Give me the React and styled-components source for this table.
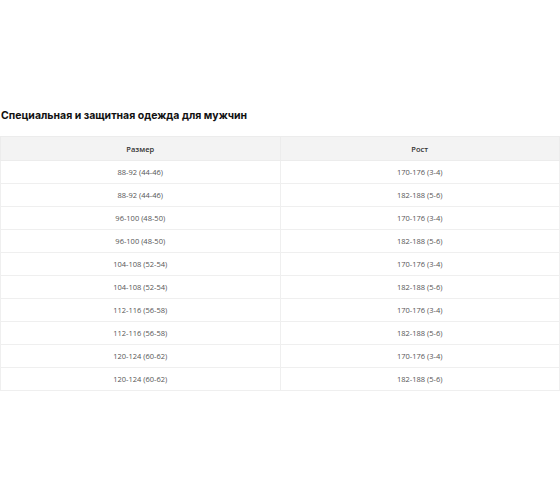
import React from 'react'
import styled, { createGlobalStyle } from 'styled-components'

const Global = createGlobalStyle`
  body {
    margin: 0;
    background: #fff;
    font-family: "Open Sans", "Liberation Sans", sans-serif;
  }
`

const Page = styled.div`
  padding-top: 107px;
  width: 560px;
`

const Title = styled.h2`
  margin: 0 0 11px 1px;
  font-family: Inter, "Open Sans", sans-serif;
  font-size: 10.5px;
  font-weight: 700;
  color: #111;
  line-height: 18px;
`

const Table = styled.table`
  width: 560px;
  border-collapse: collapse;
  table-layout: fixed;
`

const Th = styled.th`
  background: #f3f3f3;
  height: 23px;
  padding: 0;
  font-size: 7.5px;
  font-weight: 600;
  color: #333;
  border: 1px solid #ececec;
  text-align: center;
`

const Td = styled.td`
  height: 22px;
  padding: 0;
  font-size: 7.5px;
  color: #555;
  border: 1px solid #efefef;
  text-align: center;
`

const rows = [
  ['88-92 (44-46)', '170-176 (3-4)'],
  ['88-92 (44-46)', '182-188 (5-6)'],
  ['96-100 (48-50)', '170-176 (3-4)'],
  ['96-100 (48-50)', '182-188 (5-6)'],
  ['104-108 (52-54)', '170-176 (3-4)'],
  ['104-108 (52-54)', '182-188 (5-6)'],
  ['112-116 (56-58)', '170-176 (3-4)'],
  ['112-116 (56-58)', '182-188 (5-6)'],
  ['120-124 (60-62)', '170-176 (3-4)'],
  ['120-124 (60-62)', '182-188 (5-6)'],
]

const App = () => (
  <Page>
    <Global />
    <Title>Специальная и защитная одежда для мужчин</Title>
    <Table>
      <thead>
        <tr>
          <Th>Размер</Th>
          <Th>Рост</Th>
        </tr>
      </thead>
      <tbody>
        {rows.map((r, i) => (
          <tr key={i}>
            <Td>{r[0]}</Td>
            <Td>{r[1]}</Td>
          </tr>
        ))}
      </tbody>
    </Table>
  </Page>
)

export default App
